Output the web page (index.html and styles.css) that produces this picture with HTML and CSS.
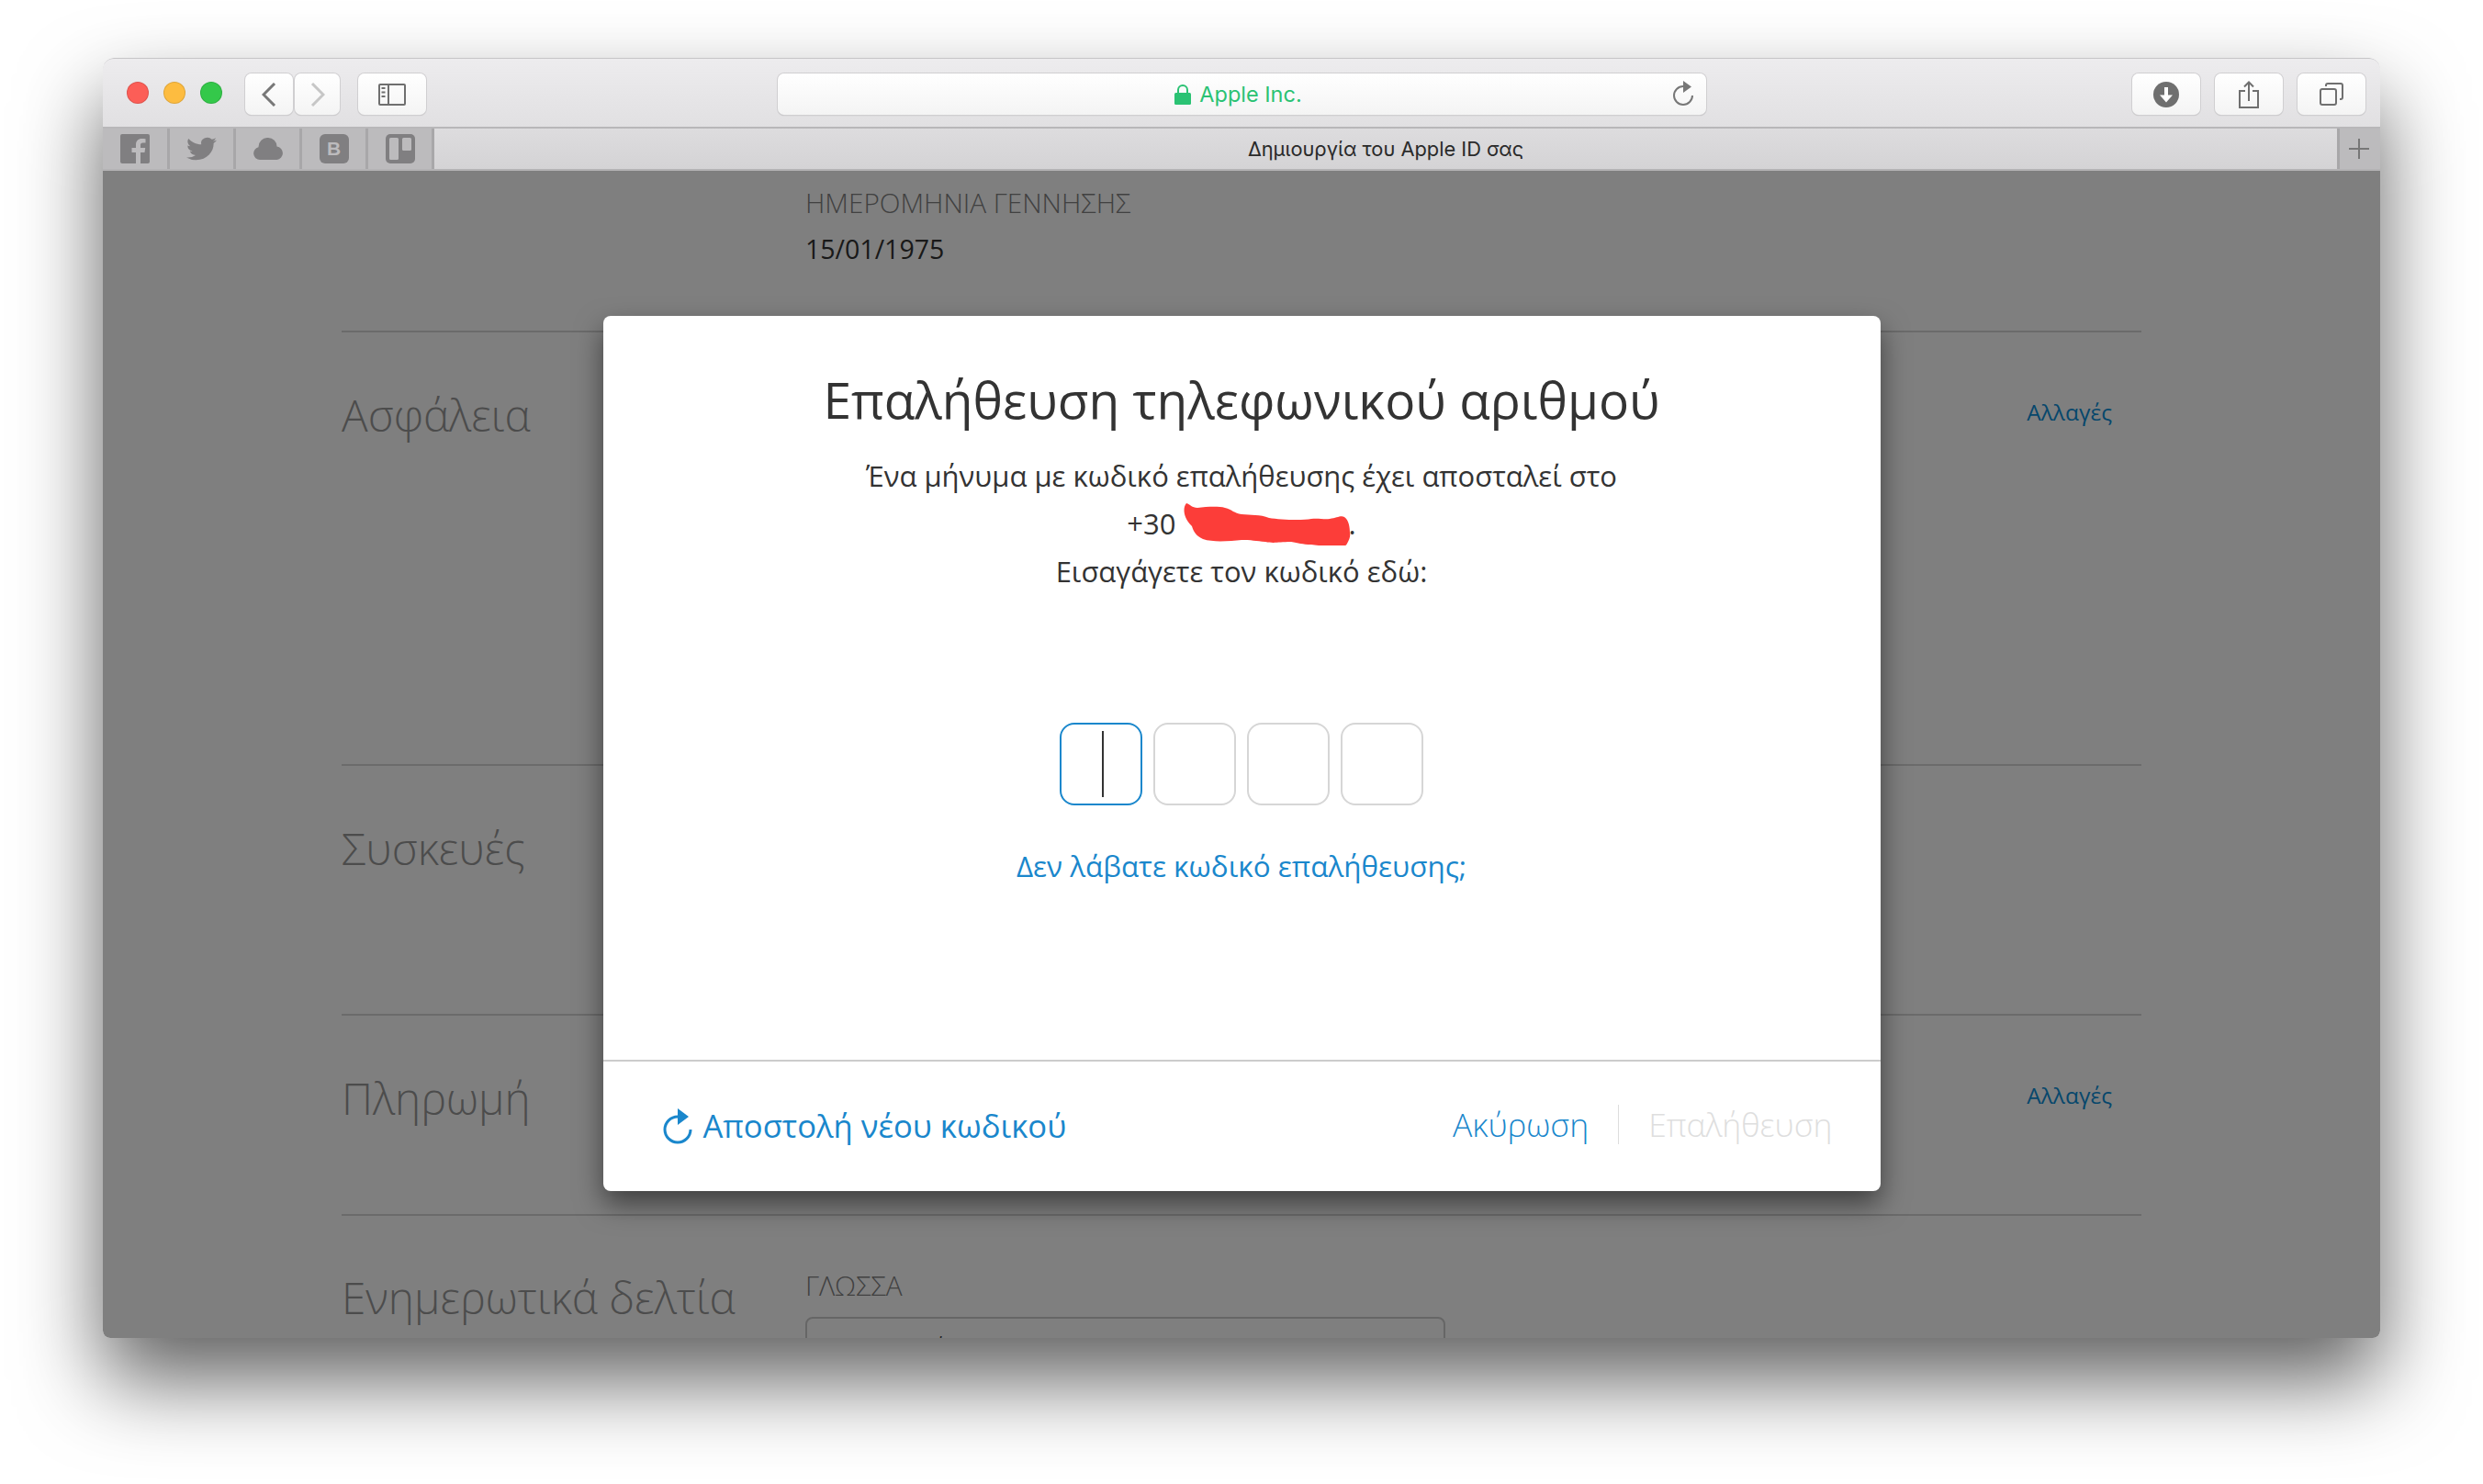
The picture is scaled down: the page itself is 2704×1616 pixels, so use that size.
FILE: index.html
```html
<!DOCTYPE html>
<html lang="el">
<head>
<meta charset="utf-8">
<title>Δημιουργία του Apple ID σας</title>
<link rel="stylesheet" href="styles.css">
</head>
<body>
<div class="window">
  <header class="toolbar">
    <div class="lights">
      <span class="light red"></span><span class="light yellow"></span><span class="light green"></span>
    </div>
    <div class="nav">
      <button class="btn back"><svg width="16" height="26" viewBox="0 0 16 26"><path d="M14 1 2 13l12 12" class="stroke-dark"/></svg></button>
      <button class="btn forward"><svg width="16" height="26" viewBox="0 0 16 26"><path d="M2 1l12 12L2 25" class="stroke-light"/></svg></button>
    </div>
    <button class="btn sidebar"><svg width="30" height="24" viewBox="0 0 30 24"><rect x="1" y="1" width="28" height="22" rx="1" class="stroke-thin"/><path d="M11 1v22" class="stroke-thin"/><path d="M3.500 5h4M3.500 9.500h4M3.500 14h4" class="stroke-thin"/></svg></button>
    <div class="address">
      <div class="address-label">
        <svg width="18" height="22" viewBox="0 0 18 22"><path d="M4 10V6a5 5 0 0110 0v4" fill="none" stroke="#2ac273" stroke-width="2"/><rect y="9" width="18" height="13" rx="1.500" fill="#2ac273"/></svg>
        <span>Apple Inc.</span>
      </div>
      <svg class="reload" width="24" height="28" viewBox="0 0 24 28"><path d="M11 6A10 10 0 1 0 21 16" fill="none" stroke="#777" stroke-width="2"/><path d="M11 0l9 6.500-9 6.500z" fill="#777"/></svg>
    </div>
    <div class="actions">
      <button class="btn action"><svg width="28" height="28" viewBox="0 0 28 28"><circle cx="14" cy="14" r="14" fill="#6f6f6f"/><path d="M12 6h4v8.500h5l-7 8-7-8h5z" fill="#fff"/></svg></button>
      <button class="btn action"><svg width="22" height="30" viewBox="0 0 22 30"><path d="M7 11H1v18h20V11h-6" class="stroke-thin"/><path d="M11 22V1.500M6 6.500l5-5 5 5" class="stroke-thin"/></svg></button>
      <button class="btn action"><svg width="26" height="25" viewBox="0 0 26 25"><rect x="1" y="7" width="17" height="17" rx="2" class="stroke-thin"/><path d="M7 4V3a2 2 0 012-2h14a2 2 0 012 2v13a2 2 0 01-2 2h-1" class="stroke-thin"/></svg></button>
    </div>
  </header>

  <nav class="tabbar">
    <div class="fav">
      <svg width="32" height="32" viewBox="0 0 32 32"><rect width="32" height="32" rx="2" fill="#807f81"/><path d="M22 32V20h4.500l.7-5H22v-3c0-1.500.6-2.500 2.600-2.500H27.500V5.200C27 5.100 25.300 5 23.500 5 19.500 5 17 7.400 17 11.500V15h-4.500v5H17v12z" fill="#bcbbbd"/></svg>
    </div>
    <div class="fav">
      <svg width="33" height="30" viewBox="0 0 24 24" preserveAspectRatio="none"><path d="M23.953 4.570a10 10 0 01-2.825.775 4.958 4.958 0 002.163-2.723c-.951.555-2.005.959-3.127 1.184a4.920 4.920 0 00-8.384 4.482C7.690 8.095 4.067 6.130 1.640 3.162a4.822 4.822 0 00-.666 2.475c0 1.710.870 3.213 2.188 4.096a4.904 4.904 0 01-2.228-.616v.060a4.923 4.923 0 003.946 4.827 4.996 4.996 0 01-2.212.085 4.936 4.936 0 004.604 3.417 9.867 9.867 0 01-6.102 2.105c-.390 0-.779-.023-1.170-.067a13.995 13.995 0 007.557 2.209c9.053 0 13.998-7.496 13.998-13.985 0-.210 0-.420-.015-.630A9.935 9.935 0 0024 4.590z" fill="#807f81"/></svg>
    </div>
    <div class="fav">
      <svg width="32" height="24" viewBox="0 0 32 24"><path d="M7 24a7 7 0 01-1.500-13.800A10 10 0 0116 0a9.500 9.500 0 019.500 9.500A7.300 7.300 0 0125.500 24z" fill="#807f81"/></svg>
    </div>
    <div class="fav">
      <div class="fav-b">B</div>
    </div>
    <div class="fav">
      <svg width="32" height="32" viewBox="0 0 32 32"><rect width="32" height="32" rx="5" fill="#807f81"/><rect x="4" y="4" width="10" height="24" rx="1.500" fill="#bcbbbd"/><rect x="18" y="4" width="10" height="14" rx="1.500" fill="#bcbbbd"/></svg>
    </div>
    <div class="tab-title">Δημιουργία του Apple ID σας</div>
    <div class="new-tab"><svg width="24" height="24" viewBox="0 0 24 24"><path d="M12 1v22M1 12h22" stroke="#777" stroke-width="2"/></svg></div>
  </nav>

  <main class="content">
    <section class="row row-birth">
      <div></div>
      <div>
        <div class="label">ΗΜΕΡΟΜΗΝΙΑ ΓΕΝΝΗΣΗΣ</div>
        <div class="value">15/01/1975</div>
      </div>
    </section>
    <section class="row row-security">
      <h2 class="row-title">Ασφάλεια</h2>
      <div></div>
      <a class="change">Αλλαγές</a>
    </section>
    <section class="row row-devices">
      <h2 class="row-title">Συσκευές</h2>
    </section>
    <section class="row row-payment">
      <h2 class="row-title">Πληρωμή</h2>
      <div></div>
      <a class="change">Αλλαγές</a>
    </section>
    <section class="row row-news">
      <h2 class="row-title">Ενημερωτικά δελτία</h2>
      <div>
        <div class="label">ΓΛΩΣΣΑ</div>
        <div class="select">Ελληνικά</div>
      </div>
    </section>

    <div class="overlay">
      <div class="modal">
        <div class="modal-main">
          <h1 class="modal-title">Επαλήθευση τηλεφωνικού αριθμού</h1>
          <p class="modal-text">Ένα μήνυμα με κωδικό επαλήθευσης έχει αποσταλεί στο<br>+30 <svg class="redact" width="186" height="46" viewBox="0 0 186 46"><path d="M6 0c4 1 6 5 12 5 10-1 22-2 30 0 8 2 10 6 18 7 10 1 20 0 30 4 12 2 36 3 46 1 8-1 14 1 20 0 8-1 12-4 16-2 5 3 6 12 6 17 1 4-1 8-2 10-2 4-2 4-6 5-12 1-26-1-34-2-10 0-14-2-22-3-14 0-18 2-28 0-10-1-16-2-26-2-12 1-30 3-42-1-8-4-10-8-12-14C2 16 2 4 6 0z" fill="#fc3d39"/></svg>.<br>Εισαγάγετε τον κωδικό εδώ:</p>
          <div class="code">
            <div class="digit active"><span class="caret"></span></div>
            <div class="digit"></div>
            <div class="digit"></div>
            <div class="digit"></div>
          </div>
          <a class="no-code">Δεν λάβατε κωδικό επαλήθευσης;</a>
        </div>
        <footer class="modal-footer">
          <a class="resend">
            <svg width="34" height="40" viewBox="0 0 34 40"><path d="M16 10A14 14 0 1 0 30 24" fill="none" stroke="#1a87cc" stroke-width="3"/><path d="M16 1l12 9-12 9z" fill="#1a87cc"/></svg>
            <span>Αποστολή νέου κωδικού</span>
          </a>
          <div class="footer-actions">
            <a class="cancel">Ακύρωση</a>
            <span class="footer-sep"></span>
            <a class="verify">Επαλήθευση</a>
          </div>
        </footer>
      </div>
    </div>
  </main>
</div>
</body>
</html>
```

FILE: styles.css
```css
* { box-sizing: border-box; }
html, body { margin: 0; height: 100%; }
body {
  background: #fff;
  padding: 63px 112px 0;
  font-family: "Open Sans", "Noto Sans", sans-serif;
  overflow: hidden;
}
.window {
  width: 2480px;
  height: 1394px;
  display: flex;
  flex-direction: column;
  border-radius: 12px 12px 8px 8px;
  box-shadow: 0 46px 90px rgba(0,0,0,.62);
  overflow: hidden;
  position: relative;
}
.toolbar {
  height: 77px;
  flex: none;
  display: flex;
  align-items: flex-start;
  padding-top: 16px;
  background: linear-gradient(#edecee, #e1e0e2);
  border-top: 1px solid #c6c5c7;
  border-bottom: 2px solid #b8b7b9;
  border-radius: 12px 12px 0 0;
}
.lights { display: flex; gap: 16px; margin: 9px 0 0 26px; }
.light { width: 24px; height: 24px; border-radius: 50%; border: 1px solid rgba(0,0,0,.12); }
.red { background: #fc5e57; }
.yellow { background: #fdbc40; }
.green { background: #34c84a; }
.btn {
  height: 45px;
  padding: 0;
  border: 0;
  border-radius: 7px;
  background: linear-gradient(#fff, #f4f4f4);
  box-shadow: 0 0 0 1px #d0cfd1, 0 1px 1px #b5b4b6;
  display: flex;
  align-items: center;
  justify-content: center;
}
.nav { display: flex; gap: 2px; margin-left: 25px; }
.back { width: 52px; }
.forward { width: 49px; }
.sidebar { width: 74px; margin-left: 20px; }
.stroke-dark, .stroke-light, .stroke-thin { fill: none; }
.stroke-dark { stroke: #777; stroke-width: 3; }
.stroke-light { stroke: #c6c6c6; stroke-width: 3; }
.stroke-thin { stroke: #6f6f6f; stroke-width: 2; }
.address {
  width: 1011px;
  height: 45px;
  margin-left: 383px;
  border-radius: 7px;
  background: linear-gradient(#fff, #f4f4f4);
  box-shadow: 0 0 0 1px #d0cfd1, 0 1px 1px #a9a8aa;
  display: flex;
  align-items: center;
  justify-content: center;
  position: relative;
}
.address-label {
  display: flex;
  align-items: center;
  gap: 9px;
  color: #2ac273;
  font: 23.5px/1 Inter, "Liberation Sans", sans-serif;
  margin-right: 8px;
}
.reload { position: absolute; right: 12px; top: 8px; }
.actions { display: flex; gap: 16px; margin-left: 464px; }
.action { width: 74px; }
.tabbar {
  height: 46px;
  flex: none;
  display: flex;
  background: linear-gradient(#dddcde, #d4d3d5);
  border-bottom: 2px solid #b4b3b5;
}
.fav {
  width: 72px;
  background: #bcbbbd;
  border-right: 3px solid #a8a7a9;
  display: flex;
  align-items: center;
  justify-content: center;
}
.fav:first-child { width: 73px; }
.fav-b {
  width: 32px;
  height: 32px;
  border-radius: 6px;
  background: #807f81;
  color: #bcbbbd;
  font: 700 21px/32px "Liberation Sans", sans-serif;
  text-align: center;
}
.tab-title {
  flex: 1;
  text-align: center;
  color: #2a2a2a;
  font: 21.8px/45px Inter, "Liberation Sans", sans-serif;
}
.new-tab {
  width: 47px;
  background: #bcbbbd;
  border-left: 3px solid #a8a7a9;
  padding-right: 3px;
  display: flex;
  align-items: center;
  justify-content: center;
}
.content {
  flex: 1;
  position: relative;
  overflow: hidden;
  background: #fff;
  padding: 0 260px;
}
.row {
  display: grid;
  grid-template-columns: 505px 1fr auto;
  border-bottom: 2px solid #d6d6d6;
}
.row-birth { height: 176px; padding-top: 16px; }
.row-security { height: 472px; padding-top: 58px; }
.row-devices { height: 272px; padding-top: 58px; }
.row-payment { height: 218px; padding-top: 58px; }
.row-news { padding-top: 57px; border-bottom: 0; }
.label { color: #828282; font-size: 29.700px; line-height: 38px; font-weight: 300; }
.value { color: #333; font-size: 28.500px; line-height: 44px; margin-top: 9px; }
.row-title { margin: 0; color: #999; font-size: 47.700px; line-height: 64px; font-weight: 300; }
.change { color: #0d8fd8; font-size: 24.500px; line-height: 40px; margin: 9px 32px 0 0; }
.select {
  width: 697px;
  height: 60px;
  margin-top: 15px;
  border: 2px solid #ccc;
  border-radius: 8px;
  padding: 11px 32px;
  color: #444;
  font-size: 30px;
  font-weight: 300;
}
.overlay {
  position: absolute;
  inset: 0;
  background: rgba(0,0,0,.5);
  display: flex;
  justify-content: center;
  align-items: flex-start;
  padding-top: 158px;
}
.modal {
  width: 1391px;
  height: 953px;
  background: #fff;
  border-radius: 8px;
  box-shadow: 0 14px 30px rgba(0,0,0,.5);
  display: flex;
  flex-direction: column;
}
.modal-main {
  flex: 1;
  display: flex;
  flex-direction: column;
  align-items: center;
  border-bottom: 2px solid #ccc;
  padding-top: 53px;
}
.modal-title {
  margin: 0;
  color: #333;
  font-size: 55px;
  line-height: 76px;
  font-weight: 400;
}
.modal-text {
  margin: 19px 0 0;
  color: #333;
  font-size: 31px;
  line-height: 52px;
  font-weight: 400;
  text-align: center;
}
.redact { vertical-align: -12px; margin: 0 -3px; }
.code { display: flex; gap: 12px; margin-top: 139px; }
.digit {
  width: 90px;
  height: 90px;
  border: 2px solid #d6d6d6;
  border-radius: 16px;
  display: flex;
  align-items: center;
  justify-content: center;
}
.digit.active { border-color: #1a87cc; }
.caret { width: 2px; height: 72px; background: #333; margin-left: 4px; }
.no-code { margin-top: 42px; color: #1a87cc; font-size: 31.400px; line-height: 48px; }
.modal-footer {
  height: 141px;
  flex: none;
  display: flex;
  align-items: center;
  justify-content: space-between;
  padding: 0 52px 0 65px;
}
.resend { display: flex; align-items: center; gap: 10px; color: #1a87cc; font-size: 34.600px; margin-bottom: 2px; }
.footer-actions { display: flex; align-items: center; gap: 32px; font-size: 35.500px; font-weight: 300; margin-bottom: 5px; }
.cancel { color: #1a87cc; }
.verify { color: #dedede; }
.footer-sep { width: 1px; height: 43px; background: #ddd; }
```
